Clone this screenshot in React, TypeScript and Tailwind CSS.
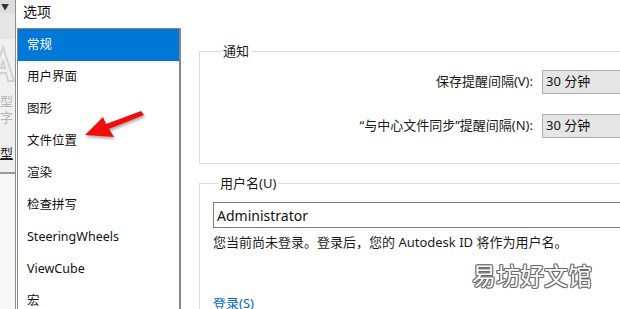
import { type ReactNode } from "react";

const font = "font-['Noto_Sans','Noto_Sans_CJK_SC',sans-serif]";

const navItems = [
  "常规",
  "用户界面",
  "图形",
  "文件位置",
  "渲染",
  "检查拼写",
  "SteeringWheels",
  "ViewCube",
  "宏",
];

// group box like the windows dialog frame
const GroupBox = ({ title, children, className }: { title: string; children: ReactNode; className?: string }) => (
  <fieldset className={`w-[460px] shrink-0 border border-[#dcdcdc] ${className ?? ""}`}>
    <legend className="ml-[5px] px-[2px] text-[13px] leading-[14px] text-[#1a1a1a]">{title}</legend>
    {children}
  </fieldset>
);

const ComboRow = ({ label }: { label: string }) => (
  <div className="flex items-center gap-[9px]">
    <span className="flex-1 text-right text-[13px] text-[#1a1a1a]">{label}</span>
    <div className="w-[100px] h-[24px] flex items-center pl-[3px] bg-[#e5e5e5] border border-[#adadad] text-[13px] text-[#111]">
      30 分钟
    </div>
  </div>
);

const App = () => {
  return (
    <div className={`relative w-[620px] h-[309px] overflow-hidden flex bg-white ${font}`}>
      {/* piece of the autocad window behind the dialog */}
      <div className="w-[16px] shrink-0 flex flex-col bg-[#f0f0f0] border-r border-[#8f8f8f] overflow-hidden">
        <div className="h-[13px] shrink-0 bg-[#dcdcdc] flex items-center text-[8px] leading-none text-[#333] pl-[1px]">▼</div>
        <div className="h-[26px] shrink-0 bg-[#e6e6e6]" />
        {/* faded autocad logo */}
        <svg className="shrink-0 -ml-[10px]" width="26" height="48" viewBox="0 0 26 48">
          <path d="M2 42 L13 8 L24 42 L18 42 L16 34 L10 34 L8 42 Z M11 29 L15 29 L13 21 Z" fill="none" stroke="#d2d2d2" strokeWidth="2" />
        </svg>
        <div className="mt-[6px] shrink-0 text-[13px] leading-[16px] text-[#b5b5b5]">型</div>
        <div className="shrink-0 text-[13px] leading-[16px] text-[#b5b5b5]">字</div>
        <div className="mt-[20px] shrink-0 text-[13px] leading-[16px] text-[#222] underline">型</div>
        <div className="mt-[11px] shrink-0 border-t-2 border-[#9a9a9a]" />
        <div className="flex-1 bg-[#f7f7f7]" />
      </div>

      <div className="flex-1 flex flex-col min-h-0">
        <div className="h-[22px] shrink-0 flex items-center pl-[7px] text-[14px] text-[#111]">选项</div>

        <div className="flex flex-1 min-h-0">
          {/* category list */}
          <div className="mt-[6px] ml-[1px] w-[164px] shrink-0 border border-r-2 border-b-0 border-[#828790] flex flex-col">
            {navItems.map((item, i) => (
              <div
                key={item}
                className={`h-[32px] shrink-0 flex items-center pl-[9px] text-[12.5px] ${
                  i === 0 ? "bg-[#0078d7] text-white" : "text-[#111]"
                }`}
              >
                {item}
              </div>
            ))}
          </div>

          <div className="flex flex-col pl-[18px] pt-[22px]">
            <GroupBox title="通知" className="h-[120px] px-[16px]">
              <div className="flex flex-col gap-[20px] pt-[12px]">
                <ComboRow label="保存提醒间隔(V):" />
                <ComboRow label="“与中心文件同步”提醒间隔(N):" />
              </div>
            </GroupBox>

            <GroupBox title="用户名(U)" className="mt-[12px] h-[150px] pl-[13px]">
              <div className="mt-[12px] h-[26px] w-[440px] flex items-center pl-[3px] border border-[#7a7a7a] text-[14px] text-[#111]">
                Administrator
              </div>
              <p className="mt-[5px] text-[13px] leading-[18px] text-[#1a1a1a]">
                您当前尚未登录。登录后，您的 Autodesk ID 将作为用户名。
              </p>
              <p className="mt-[43px] text-[13px] leading-[18px] text-[#0066cc]">登录(S)</p>
            </GroupBox>
          </div>
        </div>
      </div>

      {/* red arrow drawn over the screenshot */}
      <svg className="absolute left-0 top-0 pointer-events-none" width="620" height="309">
        <defs>
          <filter id="sh" x="-20%" y="-20%" width="140%" height="140%">
            <feDropShadow dx="1" dy="2" stdDeviation="1.5" floodColor="#000" floodOpacity="0.35" />
          </filter>
        </defs>
        <polygon
          points="85,135 103,117 106,124 141,111 144,115 109,129 114,137"
          fill="#f01010"
          filter="url(#sh)"
        />
      </svg>

      {/* watermark */}
      <div className="absolute left-[472px] top-[260px] text-[24px] leading-[30px] text-white font-['Noto_Sans_CJK_SC',sans-serif] [text-shadow:1px_0_#666,-1px_0_#666,0_1px_#666,0_-1px_#666,1px_1px_#888,-1px_-1px_#888,1px_-1px_#888,-1px_1px_#888]">
        易坊好文馆
      </div>
    </div>
  );
};

export default App;
